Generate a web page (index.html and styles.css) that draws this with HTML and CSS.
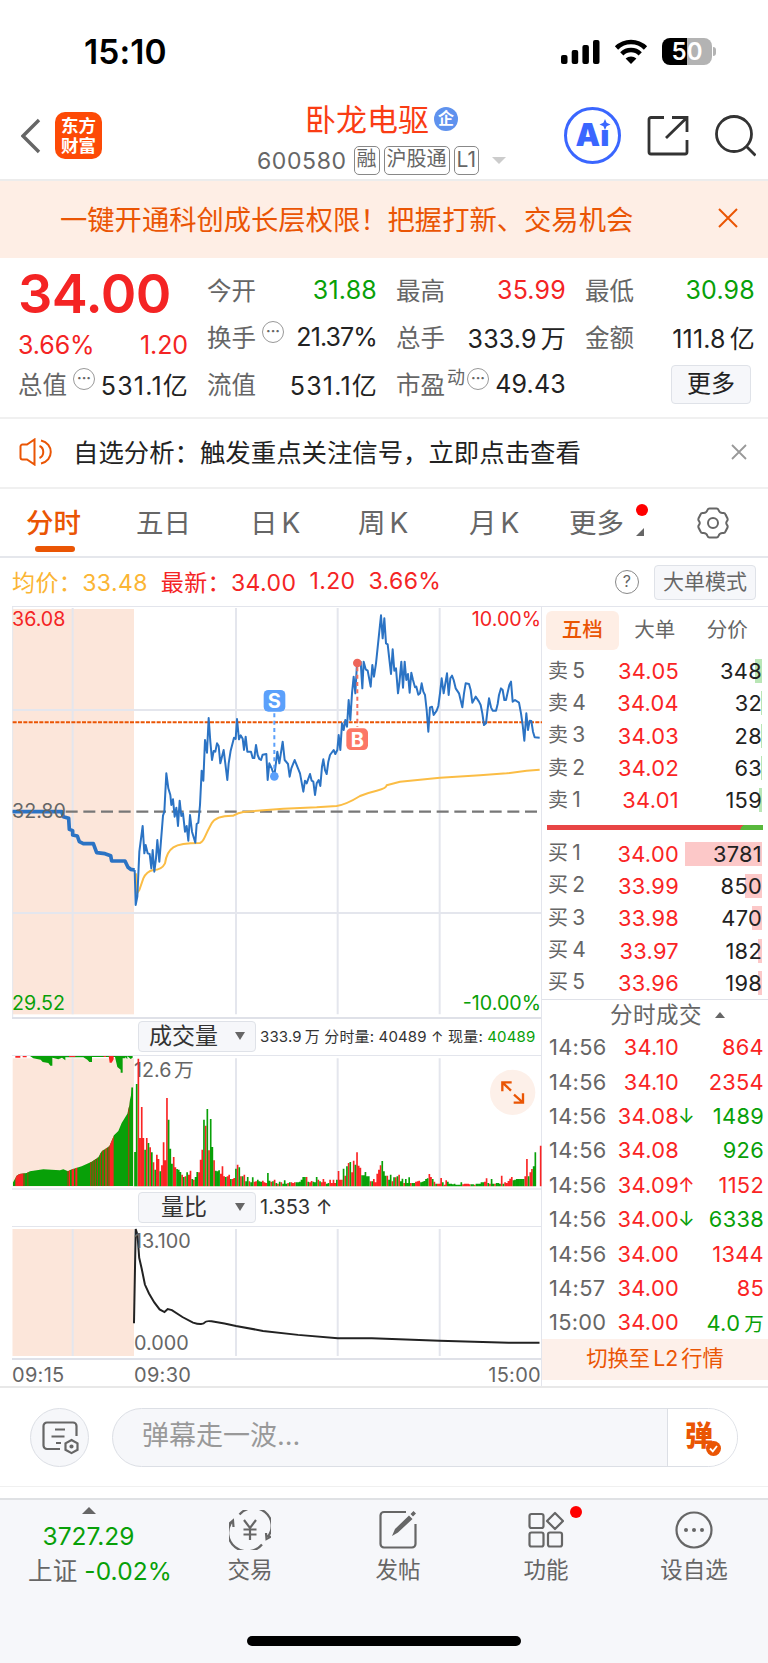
FILE: index.html
```html
<!DOCTYPE html>
<html lang="zh-CN">
<head>
  <meta charset="UTF-8" />
  <meta name="viewport" content="width=device-width, initial-scale=1" />
  <title>卧龙电驱 600580</title>
  <link rel="stylesheet" href="styles.css">
</head>
<body>

<div class="status-bar">
  <span class="time">15:10</span>
  <div class="status-icons">
    <svg width="39" height="26" viewBox="0 0 39 26">
      <rect x="0" y="16" width="6.500" height="9" rx="2"/>
      <rect x="10.700" y="11" width="6.500" height="14" rx="2"/>
      <rect x="21.400" y="6" width="6.500" height="19" rx="2"/>
      <rect x="32" y="1" width="6.500" height="24" rx="2"/>
    </svg>
    <svg width="34" height="26" viewBox="0 0 34 26">
      <path d="M2.500 9a20.500 20.500 0 0 1 29 0M7.800 14.800a13 13 0 0 1 18.400 0" fill="none" stroke="#000" stroke-width="4.600"/>
      <path d="M17 25l-5.400-5.500a8 8 0 0 1 10.800 0z"/>
    </svg>
    <div class="battery"><span>50</span><i></i></div>
  </div>
</div>

<header class="navbar">
  <svg class="back" width="20" height="36" viewBox="0 0 20 36"><path d="M18 2L2 18l16 16" fill="none" stroke="#666" stroke-width="3.400"/></svg>
  <div class="logo"><span>东方</span><span>财富</span></div>
  <div class="stock">
    <div class="stock-name">卧龙电驱<span class="badge">企</span></div>
    <div class="stock-code">600580<span class="tag first">融</span><span class="tag">沪股通</span><span class="tag">L1</span><i class="caret"></i></div>
  </div>
  <div class="nav-icons">
    <div class="ai">Ai<svg width="12" height="11" viewBox="0 0 12 11"><path d="M6 0l1.600 3.800L11.500 5.500 7.600 7.200 6 11 4.400 7.200.500 5.500l3.900-1.700z" fill="#3a66ff"/></svg></div>
    <svg width="42" height="42" viewBox="0 0 42 42" fill="none" stroke="#333" stroke-width="2.800">
      <path d="M17 2.500H4a2 2 0 0 0-2 2V37a2 2 0 0 0 2 2h34a2 2 0 0 0 2-2V25M25 2.500h15V17M40 2.500L19 23"/>
    </svg>
    <svg width="42" height="42" viewBox="0 0 42 42" fill="none" stroke="#333" stroke-width="2.800">
      <circle cx="20" cy="19" r="17.500"/><path d="M32.500 31.500l9 9"/>
    </svg>
  </div>
</header>

<div class="banner">
  <span>一键开通科创成长层权限！把握打新、交易机会</span>
  <svg width="20" height="20" viewBox="0 0 20 20"><path d="M1 1l18 18M19 1L1 19" stroke="#ea5504" stroke-width="2"/></svg>
</div>

<section class="quote">
  <div class="col first">
    <div class="price">34.00</div>
    <div class="item change"><b>3.66%</b><b>1.20</b></div>
    <div class="item"><span>总值<em class="dots">···</em></span><b class="dark wide">531.1亿</b></div>
  </div>
  <div class="col">
    <div class="item"><span>今开</span><b class="green">31.88</b></div>
    <div class="item"><span>换手<em class="dots">···</em></span><b class="dark narrow">21.37%</b></div>
    <div class="item"><span>流值</span><b class="dark wide">531.1亿</b></div>
  </div>
  <div class="col">
    <div class="item"><span>最高</span><b>35.99</b></div>
    <div class="item"><span>总手</span><b class="dark">333.9<s>万</s></b></div>
    <div class="item"><span>市盈<sup>动</sup><em class="dots tight">···</em></span><b class="dark">49.43</b></div>
  </div>
  <div class="col">
    <div class="item"><span>最低</span><b class="green">30.98</b></div>
    <div class="item"><span>金额</span><b class="dark">111.8<s>亿</s></b></div>
    <div class="more-btn">更多</div>
  </div>
</section>

<div class="notice">
  <svg width="34" height="28" viewBox="0 0 34 28" fill="none" stroke="#ea5504" stroke-width="2">
    <path d="M15.500 1.500v25L8 21.500H3.500a2 2 0 0 1-2-2v-11a2 2 0 0 1 2-2H8zM20.500 8c5 2 5 10 0 12M22 2.500c13 3 13 20 0 23"/>
  </svg>
  <span>自选分析：触发重点关注信号，立即点击查看</span>
  <svg width="16" height="16" viewBox="0 0 16 16"><path d="M1 1l14 14M15 1L1 15" stroke="#999" stroke-width="1.800"/></svg>
</div>

<nav class="tabs">
  <span class="tab active">分时</span>
  <span class="tab">五日</span>
  <span class="tab">日<i>K</i></span>
  <span class="tab">周<i>K</i></span>
  <span class="tab">月<i>K</i></span>
  <span class="tab more">更多</span>
  <svg class="gear" width="32" height="32" viewBox="0 0 32 32" fill="none" stroke="#666" stroke-width="2">
    <path d="M12.500 1.500h7q1.500 0 2 1.500 1 3 4 3h1q1.500 0 2 1.500l2 4q.500 1.500-.500 2.500-1.500 2 0 4 1 1 .500 2.500l-2 4q-.500 1.500-2 1.500h-1q-3 0-4 3-.500 1.500-2 1.500h-7q-1.500 0-2-1.500-1-3-4-3h-1q-1.500 0-2-1.500l-2-4q-.500-1.500.500-2.500 1.500-2 0-4-1-1-.500-2.500l2-4q.500-1.500 2-1.500h1q3 0 4-3 .500-1.500 2-1.500z"/>
    <circle cx="16" cy="16" r="5"/>
  </svg>
</nav>

<div class="info-row">
  <span class="avg">均价：33.48</span>
  <span class="last">最新：34.00</span>
  <span class="last">1.20</span>
  <span class="last">3.66%</span>
  <span class="help">?</span>
  <span class="mode-btn">大单模式</span>
</div>

<main class="board">
  <div class="charts">
    <svg class="price-chart" viewBox="36 171 1590 1230" preserveAspectRatio="none">
      <rect x="38" y="177" width="364" height="1216" fill="#fce6da"/>
      <path class="grid" d="M38 480H1626M38 1089H1626M218 174V1393M708 174V1393M1013 174V1393M1319 174V1393"/>
      <path class="grid edge" d="M38 171V1401"/>
      <path d="M38 517H1626" stroke="#ea5504" stroke-width="6" stroke-dasharray="12 4"/>
      <path d="M38 785H1626" stroke="#777" stroke-width="7" stroke-dasharray="36 17"/>
      <path class="line avg-line" d="M408 970L411 1030 418 1020 430 985Q440 964 460 960Q485 960 495 940Q500 905 520 892T600 879Q608 876 615 860T635 820T700 797Q715 788 730 786L800 780 850 776 950 772 1010 768Q1040 763 1080 738Q1100 729 1130 722T1160 706L1200 695 1260 689 1320 683 1440 676 1520 670 1580 662 1619 659"/>
      <path class="line pre-line" d="M38 785H185L190 800 206 805 208 838 218 842V855L232 858 238 875 250 881H280L290 908 315 911 332 917 335 933H375L384 952 392 958 404 960"/>
      <path class="line" d="M404 960L407 1065 412 1040 418 905 428 828 433 910 437 885 443 910 449 912 454 955 458 900 463 965 468 925 472 870 478 935 489 797 493 785 499 670 505 715 511 735 514 765 519 748 524 800 529 773 534 828 539 752 544 798 549 790 555 845 560 828 565 872 570 795 576 845 586 878 590 822 595 818 600 765 605 662 610 692 615 570 621 608 626 504 631 575 636 630 641 603 646 605 651 580 656 588 661 640 671 600 682 690 686 640 692 602 702 563 707 567 711 507 717 568 722 556 728 566 732 600 737 560 742 605 753 605 758 624 763 624 768 585 773 615 778 627 783 630 788 614 799 612 803 690 808 640 815 655 823 678 832 605 838 640 848 575 854 630 864 642 869 680 874 655 884 630 894 655 900 670 910 725 915 692 920 700 930 672 935 692 940 695 945 735 950 700 956 690 961 708 966 650 970 628 975 660 980 672 985 635 990 615 1001 600 1006 612 1012 600 1016 555 1021 600 1026 520 1031 540 1036 510 1041 530 1046 450 1051 510 1056 430 1061 380 1066 430 1071 340 1082 335 1087 415 1091 335 1097 358 1103 362 1112 410 1117 345 1122 380 1128 340 1143 196 1148 265 1153 205 1158 280 1163 283 1173 372 1178 298 1183 362 1188 355 1194 430 1198 400 1204 335 1209 413 1214 335 1219 390 1224 372 1229 428 1234 368 1239 390 1245 412 1249 410 1255 434 1260 430 1265 400 1270 425 1275 435 1280 480 1285 545 1290 472 1296 470 1301 495 1310 482 1315 468 1320 430 1325 385 1331 430 1341 370 1346 435 1351 385 1356 377 1361 390 1367 415 1377 430 1387 472 1392 430 1397 400 1407 402 1412 420 1417 458 1427 440 1437 455 1442 465 1447 490 1452 525 1458 520 1462 485 1467 445 1473 472 1478 482 1488 482 1493 462 1497 435 1503 415 1508 420 1513 450 1518 450 1528 405 1533 395 1538 455 1545 450 1557 458 1563 490 1568 525 1573 572 1579 490 1584 540 1589 512 1594 513 1599 545 1604 562 1619 563"/>
      <path d="M823 490V668" stroke="#5ba0fb" stroke-width="6" stroke-dasharray="12 10"/>
      <circle cx="823" cy="679" r="13" fill="#5ba0fb"/>
      <rect x="791" y="420" width="65" height="65" rx="14" fill="#5ba0fb"/>
      <text class="mark" x="823" y="475">S</text>
      <path d="M1072 352V530" stroke="#f4705f" stroke-width="6" stroke-dasharray="12 10"/>
      <circle cx="1072" cy="339" r="13" fill="#ee6559"/>
      <rect x="1039" y="535" width="65" height="65" rx="14" fill="#fc7766"/>
      <text class="mark" x="1072" y="591">B</text>
      <text class="label red" x="36" y="228">36.08</text>
      <text class="label" x="36" y="804">32.80</text>
      <text class="label green" x="36" y="1380">29.52</text>
      <text class="label red" x="1623" y="228" text-anchor="end">10.00%</text>
      <text class="label green" x="1623" y="1380" text-anchor="end">-10.00%</text>
    </svg>

    <div class="chart-head">
      <span class="select">成交量<i></i></span>
      <span class="small">333.9<s>万</s> 分时量: 40489 ↑ 现量: <span class="green">40489</span></span>
    </div>
    <svg class="volume-chart" id="volumeChart" viewBox="36 467 1590 396" preserveAspectRatio="none">
      <rect x="38" y="474" width="364" height="384" fill="#fce6da"/>
      <path class="grid" d="M218 474V858M708 474V858M1013 474V858M1319 474V858"/>
      <clipPath id="preArea"><path d="M38 858V848L50 826 58 821 80 818 90 813 130 807 180 810 190 807 204 813 212 808 245 798 275 784 295 771 305 753 328 738 342 705 355 692 365 668 382 640 388 615 390 598 393 585 394 561H400V858z"/></clipPath>
      <g clip-path="url(#preArea)">
        <rect x="38" y="474" width="362" height="384" fill="#08a008"/>
        <path d="M46 474h24v384H46zM206 474h4v384h-4zM215 474h7v384h-7zM226 474h6v384h-6zM316 474h4v384h-4zM328 474h13v384h-13z" fill="#fa2424"/>
        <path d="M70 474h4v384h-4zM82 474h3v384h-3zM202 474h4v384h-4zM270 474h4v384h-4zM277 474h4v384h-4zM284 474h4v384h-4zM291 474h3v384h-3zM299 474h4v384h-4zM306 474h6v384h-6zM323 474h5v384h-5zM384 474h4v384h-4z" fill="#944a10"/>
      </g>
      <path d="M38 467H90L100 474 122 478 128 485 145 488 151 496H157V472L175 477 186 472 196 480V471H250L262 478 268 485H276V470H345L352 500 362 508V517H368V474H376V470L382 477V468L392 476 398 472V467z" fill="#08a008"/>
      <path d="M46 467h15v5H46zM68 467h12v4H68zM207 467h19v3h-19zM311 467h7v3h-7zM326 467h15v10l-6 10h-6z" fill="#fa2424"/>
      <text class="label" x="402" y="531">12.6<tspan dx="8">万</tspan></text>
      <circle cx="1538" cy="576" r="68" fill="#fdf0e9"/>
      <path d="M1533 571L1507 546M1507 573V546H1535M1542 583L1569 607M1569 579V607H1541" fill="none" stroke="#ea5504" stroke-width="7"/>
    </svg>

    <div class="chart-head second">
      <span class="select">量比<i></i></span>
      <span class="mid">1.353 ↑</span>
    </div>
    <svg class="ratio-chart" viewBox="12 1227 530 132" preserveAspectRatio="none">
      <rect x="12.500" y="1229" width="121.500" height="128" fill="#fce6da"/>
      <path class="grid thin" d="M72.700 1229V1357M236 1229V1357M337.700 1229V1357M439.700 1229V1357"/>
      <path d="M134 1324L135.700 1229 137.500 1235 139.200 1258 141.700 1269 144.900 1285 149 1294 154.300 1303 159.600 1310 164.500 1312.700 167.700 1309.700 171.900 1310.700 182.400 1317.700 193 1323.300Q198 1325 201 1324.800T205 1323 211.500 1322L224.500 1324.300 236 1326.700 263 1331.700 298 1335.700 337.800 1339 371.800 1339 439.500 1341.700 508.600 1343.700H539.500" fill="none" stroke="#222" stroke-width="2"/>
      <text class="label px" x="134" y="1248.500">13.100</text>
      <text class="label px" x="134" y="1351">0.000</text>
    </svg>
    <div class="time-axis"><span>09:15</span><span>09:30</span><span>15:00</span></div>
  </div>

  <aside class="side">
    <div class="side-tabs"><span class="on">五档</span><span>大单</span><span>分价</span></div>
    <ul class="orders">
      <li><span>卖<i>5</i></span><b>34.05</b><em class="sell" style="--w:7px">348</em></li>
      <li><span>卖<i>4</i></span><b>34.04</b><em class="sell" style="--w:1px">32</em></li>
      <li><span>卖<i>3</i></span><b>34.03</b><em class="sell" style="--w:1px">28</em></li>
      <li><span>卖<i>2</i></span><b>34.02</b><em class="sell" style="--w:1px">63</em></li>
      <li><span>卖<i>1</i></span><b>34.01</b><em class="sell" style="--w:3px">159</em></li>
    </ul>
    <div class="ratio-bar"></div>
    <ul class="orders">
      <li><span>买<i>1</i></span><b>34.00</b><em style="--w:77px">3781</em></li>
      <li><span>买<i>2</i></span><b>33.99</b><em style="--w:17px">850</em></li>
      <li><span>买<i>3</i></span><b>33.98</b><em style="--w:10px">470</em></li>
      <li><span>买<i>4</i></span><b>33.97</b><em style="--w:4px">182</em></li>
      <li><span>买<i>5</i></span><b>33.96</b><em style="--w:4px">198</em></li>
    </ul>
    <div class="deals-title">分时成交<i></i></div>
    <ul class="deals">
      <li><span>14:56</span><b>34.10</b><u></u><em>864</em></li>
      <li><span>14:56</span><b>34.10</b><u></u><em>2354</em></li>
      <li><span>14:56</span><b>34.08</b><u class="green">↓</u><em class="green">1489</em></li>
      <li><span>14:56</span><b>34.08</b><u></u><em class="green">926</em></li>
      <li><span>14:56</span><b>34.09</b><u>↑</u><em>1152</em></li>
      <li><span>14:56</span><b>34.00</b><u class="green">↓</u><em class="green">6338</em></li>
      <li><span>14:56</span><b>34.00</b><u></u><em>1344</em></li>
      <li><span>14:57</span><b>34.00</b><u></u><em>85</em></li>
      <li><span>15:00</span><b>34.00</b><u></u><em class="green">4.0<s>万</s></em></li>
    </ul>
    <div class="l2-btn">切换至<i>L2</i>行情</div>
  </aside>
</main>

<div class="comment">
  <div class="round-btn">
    <svg width="38" height="34" viewBox="0 0 38 34" fill="none" stroke="#666" stroke-width="2.200">
      <path d="M18 28H5a3.500 3.500 0 0 1-3.500-3.500V5A3.500 3.500 0 0 1 5 1.500h26A3.500 3.500 0 0 1 34.500 5v10M13 8.500h10M9.500 15.500h13M14 22h5"/>
      <path d="M29.500 19l6 3.300v6.500l-6 3.300-6-3.300v-6.500z"/><circle cx="29.500" cy="25.500" r="1" />
    </svg>
  </div>
  <div class="input">
    <span>弹幕走一波...</span>
    <div class="danmu">弹<svg width="15" height="15" viewBox="0 0 15 15"><circle cx="7.500" cy="7.500" r="7.500" fill="#ea5504"/><path d="M4 7.500l2.800 2.800L11 5" fill="none" stroke="#fff" stroke-width="1.800"/></svg></div>
  </div>
</div>

<footer class="bottom-nav">
  <div class="index">
    <i></i>
    <b>3727.29</b>
    <span>上证 <b>-0.02%</b></span>
  </div>
  <div class="nav-item">
    <svg width="42" height="40" viewBox="0 0 42 40" fill="none" stroke="#666" stroke-width="2.200">
      <path d="M10.500 4.500A18 17.500 0 0 1 38.500 27M3.500 11A18 17.500 0 0 0 33 34.500M0 14l4-3.500.500 6.500M42 26.500l-4.500 2.500-.500-6M15 10l6 8 6-8M21 18v12M14.500 19.500h13M14.500 24.500h13"/>
    </svg>
    <span>交易</span>
  </div>
  <div class="nav-item">
    <svg width="40" height="40" viewBox="0 0 40 40" fill="none" stroke="#666" stroke-width="2.200">
      <path d="M28 2H6a3.500 3.500 0 0 0-3.500 3.500V34A3.500 3.500 0 0 0 6 37.500h28a3.500 3.500 0 0 0 3.500-3.500V14"/>
      <path d="M14 26l3-7L31 5.500l3.500 3.500L20 22.500zM32.500 4l3-3 2.500 2.500-3 3z" fill="#666" stroke="none"/>
    </svg>
    <span>发帖</span>
  </div>
  <div class="nav-item dot">
    <svg width="36" height="38" viewBox="0 0 36 38" fill="none" stroke="#666" stroke-width="2.200">
      <rect x="1.500" y="3" width="14" height="14" rx="2"/><rect x="1.500" y="21.500" width="14" height="14" rx="2"/><rect x="20" y="21.500" width="14" height="14" rx="2"/>
      <path d="M27 2l8 8-8 8-8-8z" stroke-linejoin="round"/>
    </svg>
    <span>功能</span>
  </div>
  <div class="nav-item">
    <svg width="38" height="38" viewBox="0 0 38 38">
      <circle cx="19" cy="19" r="17.500" fill="none" stroke="#666" stroke-width="2.200"/>
      <g fill="#666"><circle cx="11" cy="19" r="2"/><circle cx="19" cy="19" r="2"/><circle cx="27" cy="19" r="2"/></g>
    </svg>
    <span>设自选</span>
  </div>
  <div class="home-bar"></div>
</footer>

<script src="script.js"></script>
</body>
</html>
```
FILE: styles.css
```css
* {
  box-sizing: border-box;
}

body {
  font-family: Inter, "Noto Sans CJK SC", sans-serif;
  background: #fff;
  color: #666;
  margin: 0;
  width: 768px;
  height: 1663px;
  overflow: hidden;
}

ul {
  list-style: none;
  margin: 0;
  padding: 0;
}

b, i, em, s, u {
  font-style: normal;
  font-weight: 400;
  text-decoration: none;
}

svg {
  display: block;
  flex: none;
}

.green {
  color: #08a008 !important;
}

/* status bar */
.status-bar {
  height: 90px;
  padding: 13px 53px 0 84px;
  display: flex;
  justify-content: space-between;
  align-items: center;
  color: #000;
}

.time {
  font-size: 33.5px;
  font-weight: 600;
  letter-spacing: 0.1px;
}

.status-icons {
  display: flex;
  align-items: center;
  gap: 14px;
}

.battery {
  position: relative;
  width: 50px;
  height: 27px;
  border-radius: 8px;
  background: linear-gradient(90deg, #000 50%, #b3b3b3 50%);
  color: #fff;
  font-size: 24px;
  font-weight: 600;
  line-height: 27px;
  text-align: center;
  margin-right: 3px;
}

.battery i {
  position: absolute;
  right: -4px;
  top: 9px;
  width: 3px;
  height: 9px;
  border-radius: 0 3px 3px 0;
  background: #b3b3b3;
}

/* navbar */
.navbar {
  height: 91px;
  border-bottom: 2px solid #ececec;
  padding-left: 21px;
  display: flex;
  align-items: center;
}

.back {
  margin-top: 3px;
}

.logo {
  width: 47px;
  height: 47px;
  margin-left: 14px;
  margin-top: 2px;
  border-radius: 10px;
  background: #fd4a06;
  color: #fff;
  font-family: "Noto Sans CJK SC", sans-serif;
  font-size: 17.5px;
  font-weight: 700;
  display: flex;
  flex-direction: column;
  align-items: center;
  padding-top: 3px;
}

.logo span {
  height: 20px;
  line-height: 20px;
}

.stock {
  width: 260px;
  margin-left: 152px;
  margin-top: 9px;
}

.stock-name {
  display: flex;
  align-items: center;
  height: 40px;
  padding-left: 51px;
  font-size: 31px;
  color: #fa3c14;
}

.badge {
  width: 24px;
  height: 24px;
  margin: 2px 0 0 5px;
  border-radius: 50%;
  background: #5f92ee;
  color: #fff;
  font-size: 16px;
  font-weight: 700;
  line-height: 23px;
  text-align: center;
}

.stock-code {
  display: flex;
  align-items: center;
  height: 43px;
  padding: 3px 0 0 3px;
  font-size: 23px;
  letter-spacing: 0.6px;
}

.tag {
  height: 29px;
  margin-left: 4px;
  padding: 0 2px;
  border: 1.5px solid #888;
  border-radius: 5px;
  font-size: 20px;
  line-height: 25px;
  letter-spacing: 0;
}

.tag:nth-of-type(3) {
  font-size: 21px;
}

.tag.first {
  margin-left: 7px;
}

.caret {
  margin-left: 13px;
  border: 7px solid transparent;
  border-top-color: #ccc;
  border-bottom: 0;
}

.nav-icons {
  display: flex;
  align-items: center;
  gap: 25.5px;
  margin-left: 50px;
  margin-top: 2px;
}

.ai {
  position: relative;
  width: 57px;
  height: 57px;
  border: 3px solid #3a66ff;
  border-radius: 50%;
  color: #3a66ff;
  font-size: 31px;
  font-weight: 900;
  line-height: 50px;
  text-align: center;
}

.ai svg {
  position: absolute;
  right: 7px;
  top: 9px;
  background: #fff;
}

/* orange banner */
.banner {
  height: 77px;
  padding: 0 30px 3px 60px;
  display: flex;
  justify-content: space-between;
  align-items: center;
  background: #feeee5;
  color: #ea5504;
  font-size: 27.3px;
}

/* quote */
.quote {
  height: 161px;
  padding: 8px 13px 0 18px;
  display: grid;
  grid-template-columns: 170px 170px 170px 170px;
  column-gap: 19px;
  border-bottom: 2px solid #f0f0f0;
}

.col {
  display: flex;
  flex-direction: column;
}

.item {
  height: 47px;
  display: flex;
  justify-content: space-between;
  align-items: center;
  white-space: nowrap;
  font-size: 24.5px;
}

.item span {
  display: flex;
  align-items: center;
}

.item b {
  color: #f42424;
  font-size: 25px;
  letter-spacing: 0.2px;
}

.item b.dark {
  color: #222;
}

.item b.narrow {
  letter-spacing: -0.9px;
}

.item b.wide {
  letter-spacing: 1.2px;
  margin-right: -1px;
}

.item s {
  margin-left: 4px;
}

.price {
  height: 57px;
  line-height: 56px;
  font-size: 54px;
  font-weight: 600;
  letter-spacing: -0.5px;
  color: #f42424;
}

.change {
  height: 37px;
  padding-top: 6px;
}

.change b {
  letter-spacing: -0.1px;
}

.dots {
  width: 22px;
  height: 22px;
  margin: -9px 0 0 6px;
  border: 1.6px solid #999;
  border-radius: 50%;
  font-size: 14px;
  font-weight: 700;
  line-height: 18px;
  text-align: center;
}

.dots.tight {
  margin-left: 2px;
}

.item sup {
  font-size: 18px;
  line-height: 18px;
  margin-top: -12px;
  margin-left: 2px;
}

.more-btn {
  width: 80px;
  height: 39px;
  margin: 5px 4px 0 auto;
  border: 1.5px solid #dfe2e8;
  border-radius: 4px;
  background: #f6f7fa;
  color: #222;
  font-size: 24px;
  line-height: 35px;
  text-align: center;
}

/* notice */
.notice {
  height: 70px;
  padding: 0 21px 2px 19px;
  display: flex;
  align-items: center;
  border-bottom: 2px solid #f0f0f0;
  color: #222;
  font-size: 25.4px;
}

.notice span {
  margin-left: 20px;
  margin-top: -2px;
  flex: 1;
}

/* tabs */
.tabs {
  position: relative;
  height: 69px;
  display: flex;
  align-items: center;
  border-bottom: 2px solid #e5e7ec;
  font-size: 27.5px;
  padding-left: 26px;
}

.tab {
  position: relative;
  width: 110px;
  margin-top: -4px;
  white-space: nowrap;
}

.tab:nth-child(3) { margin-left: 4px; width: 108px; }
.tab:nth-child(4) { width: 111px; }
.tab:nth-child(5) { width: 100px; }

.tab i {
  margin-left: 4px;
  font-size: 28px;
}

.tab.active {
  color: #ea5504;
  font-weight: 500;
}

.tab.active::after {
  content: "";
  position: absolute;
  left: 9px;
  bottom: -11px;
  width: 40px;
  height: 6px;
  border-radius: 3px;
  background: #ea5504;
}

.tab.more::before {
  content: "";
  position: absolute;
  left: 67px;
  top: 3px;
  width: 12px;
  height: 12px;
  border-radius: 50%;
  background: #f00;
}

.tab.more::after {
  content: "";
  position: absolute;
  left: 67px;
  top: 27px;
  border-left: 8px solid transparent;
  border-bottom: 8px solid #666;
}

.gear {
  margin-left: 18px;
}

/* info row */
.info-row {
  height: 48px;
  padding: 0 12px;
  display: flex;
  align-items: center;
  gap: 13px;
  font-size: 23px;
  letter-spacing: 0.4px;
  white-space: nowrap;
}

.avg,
.last {
  margin-top: -3px;
}

.avg {
  color: #fbb534;
}

.last {
  color: #f42424;
}

.help {
  width: 24px;
  height: 24px;
  margin-left: auto;
  margin-right: 2px;
  border: 1.6px solid #888;
  border-radius: 50%;
  font-size: 16px;
  line-height: 21px;
  text-align: center;
}

.mode-btn {
  width: 102px;
  height: 35px;
  border: 1.5px solid #dfe2e8;
  border-radius: 4px;
  background: #f6f7fa;
  font-size: 21px;
  letter-spacing: 0;
  line-height: 31px;
  text-align: center;
}

/* charts */
.board {
  display: flex;
  height: 782px;
  border-bottom: 2px solid #e8e8e8;
}

.charts {
  width: 542px;
  padding-left: 12px;
  border-right: 1.5px solid #e3e5ec;
}

.price-chart,
.volume-chart,
.ratio-chart {
  width: 530px;
  border-top: 1px solid #e3e5ec;
}

.price-chart { height: 411px; }
.volume-chart { height: 133px; }
.ratio-chart { height: 132px; }

.grid {
  stroke: #e4e6ed;
  stroke-width: 6;
  fill: none;
}

.grid.edge {
  stroke-width: 3;
}

.grid.thin {
  stroke-width: 2;
}

.line {
  fill: none;
  stroke: #2b73c4;
  stroke-width: 6;
  stroke-linejoin: round;
}

.avg-line {
  stroke: #fbbd45;
}

.pre-line {
  stroke-width: 11;
}

.mark {
  fill: #fff;
  font-size: 60px;
  font-weight: 700;
  text-anchor: middle;
}

.label {
  fill: #666;
  font-size: 59px;
}

.label.px {
  font-size: 19.8px;
}

.label.red {
  fill: #f42424;
}

.label.green {
  fill: #08a008;
}

.chart-head {
  height: 38px;
  padding: 0 0 2px 126px;
  display: flex;
  align-items: center;
  gap: 4px;
  border-top: 2px solid #dfe1e8;
  white-space: nowrap;
  color: #333;
}

.chart-head.second {
  border-top-color: #eceef2;
}

.select {
  flex: none;
  width: 118px;
  height: 31px;
  padding: 0 10px;
  display: flex;
  justify-content: space-between;
  align-items: center;
  border: 1.5px solid #dfe2e8;
  border-radius: 4px;
  background: #f6f7fa;
  font-size: 23px;
  line-height: 26px;
}

.second .select {
  padding-left: 22px;
}

.select i {
  border: 5px solid transparent;
  border-top: 8px solid #666;
  border-bottom: 0;
}

.small {
  font-size: 15px;
  letter-spacing: 0.15px;
  margin-top: -2px;
}

.small s {
  margin-left: 3px;
}

.mid {
  font-size: 20px;
}

.time-axis {
  height: 29px;
  display: grid;
  grid-template-columns: 122px 1fr auto;
  align-items: center;
  border-top: 2px solid #dfe1e8;
  padding-top: 2px;
  font-size: 20px;
  letter-spacing: 0.3px;
}

/* right side */
.side {
  flex: 1;
  border-top: 1px solid #e3e5ec;
}

.side-tabs {
  height: 48px;
  padding: 4px 0 0 4px;
  display: flex;
  font-size: 20.5px;
}

.side-tabs span {
  width: 72.5px;
  height: 39px;
  border-radius: 6px;
  line-height: 37px;
  text-align: center;
}

.side-tabs .on {
  background: #feeee5;
  color: #ea5504;
  font-weight: 500;
}

.orders li,
.deals li {
  height: 32.3px;
  display: flex;
  align-items: center;
  font-size: 21.8px;
  letter-spacing: 0.3px;
}

.orders li {
  padding: 0 6px;
}

.orders span {
  width: 54px;
  font-size: 20px;
  line-height: 24px;
  margin-top: -1px;
}

.orders span i {
  font-size: 21px;
  margin-left: 4px;
}

.orders b,
.deals b {
  width: 77px;
  text-align: right;
  color: #fa2424;
}

.orders em {
  flex: 1;
  height: 24px;
  line-height: 25px;
  text-align: right;
  color: #222;
  background: linear-gradient(#fcc8c8, #fcc8c8) right / var(--w) 100% no-repeat;
}

.orders em.sell {
  background-image: linear-gradient(#b9e6b5, #b9e6b5);
}

.ratio-bar {
  height: 5px;
  margin: 9px 5px 7px 5px;
  background: linear-gradient(120deg, #e84545 89.5%, #58b83c 89.5%);
}

.deals-title {
  height: 31px;
  border-top: 1.5px solid #dfe1e8;
  display: flex;
  justify-content: center;
  align-items: center;
  gap: 13px;
  padding-left: 25px;
  font-size: 22.5px;
  line-height: 28px;
  letter-spacing: 0.5px;
}

.deals-title i {
  border: 5px solid transparent;
  border-bottom: 6px solid #666;
  border-top: 0;
}

.deals li {
  height: 34.4px;
  padding: 0 4px 0 7px;
}

.deals span {
  width: 60px;
}

.deals b {
  width: 70px;
}

.deals u {
  width: 15px;
  font-size: 20px;
  margin-left: -1px;
  color: #fa2424;
  white-space: nowrap;
}

.deals em {
  flex: 1;
  text-align: right;
  color: #fa2424;
}

.deals s {
  margin-left: 4px;
  font-size: 19.5px;
}

.l2-btn {
  height: 41px;
  background: #fdf0ea;
  color: #ea5504;
  font-size: 21.3px;
  line-height: 38px;
  text-align: center;
}

.l2-btn i {
  margin: 0 3px;
}

/* comment bar */
.comment {
  height: 99px;
  padding: 0 30px;
  display: flex;
  align-items: center;
  gap: 23px;
  border-bottom: 1px solid #f0f0f0;
}

.round-btn {
  width: 59px;
  height: 59px;
  padding: 1px 0 0 2px;
  display: flex;
  justify-content: center;
  align-items: center;
  border: 1.5px solid #dcdfe5;
  border-radius: 50%;
  background: #f6f7fa;
}

.input {
  flex: 1;
  height: 59px;
  padding-left: 29px;
  display: flex;
  justify-content: space-between;
  align-items: center;
  border: 1.5px solid #dcdfe5;
  border-radius: 30px;
  background: #f6f7fa;
  overflow: hidden;
  color: #999;
  font-size: 27px;
}

.input span {
  margin-top: -7px;
}

.danmu {
  position: relative;
  width: 70px;
  height: 57px;
  padding-left: 17px;
  border-left: 1.5px solid #dcdfe5;
  background: #fff;
  color: #ea5504;
  font-size: 28px;
  font-weight: 900;
  line-height: 54px;
}

.danmu svg {
  position: absolute;
  left: 38px;
  top: 32px;
}

/* bottom nav */
.bottom-nav {
  position: relative;
  height: 165px;
  margin-top: 11px;
  padding-left: 3px;
  display: grid;
  grid-template-columns: 173px 148px 148px 148px 148px;
  align-items: start;
  border-top: 2px solid #dfe1e4;
  background: #f6f7fa;
}

.index {
  display: flex;
  flex-direction: column;
  align-items: center;
  padding: 7px 0 0 21px;
  font-size: 24.5px;
  white-space: nowrap;
}

.index b {
  color: #08a008;
}

.index > i {
  border: 7px solid transparent;
  border-bottom: 7px solid #666;
  border-top: 0;
  margin-right: 22px;
}

.index > b {
  margin: 7px 23px 0 0;
  line-height: 31px;
}

.index > span {
  line-height: 39px;
  letter-spacing: 0.1px;
}

.nav-item {
  position: relative;
  display: flex;
  flex-direction: column;
  align-items: center;
  padding-top: 10px;
  font-size: 22.5px;
}

.nav-item svg {
  height: 40px;
}

.nav-item span {
  line-height: 40px;
}

.nav-item.dot::after {
  content: "";
  position: absolute;
  left: 98px;
  top: 6px;
  width: 12px;
  height: 12px;
  border-radius: 50%;
  background: #f00;
}

.home-bar {
  position: absolute;
  left: 247px;
  bottom: 17px;
  width: 274px;
  height: 10px;
  border-radius: 5px;
  background: #000;
}
```
FILE: script.js
```js
// volume per minute, r = up, g = down
const volumes = `103g 307g 383r 145r 238r 145r 110g 145r 130g 117r 102g 72r 50g 95r 82r 45g 63r 132r 78r 265r
200g 113g 68g 88r 57r 52g 50g 43g 35r 28g 30r 42g 35r 47r 22g 20r 28g 43g 42r 80r 110r 200g 182r 232g 108r 202g
118g 78r 47g 45g 48g 38r 60r 30r 28g 30r 35r 22g 22r 25r 53g 65r 57g 30r 30g 35r 15g 28g 15r 12g 27g 14r 15r 20g
15g 14g 17r 12r 10r 40g 17g 14r 15g 20r 10g 8r 14g 12r 8g 18g 8g 10r 12g 12r 10r 12r 12g 12g 14g 20g 28g 28g 28r
14g 12r 16r 14g 12g 28g 20r 15g 12r 22r 14r 8g 10g 20r 10r 20r 10r 20g 46r 20r 20r 53g 32r 60g 70r 73g 42r 77r
65g 102r 62r 56r 33g 33g 43g 30g 30g 15r 15g 22r 12r 38r 50r 63r 76g 45g 32g 32r 20g 35g 15r 27g 27r 30g 35r 15g
23g 10r 22g 10g 27g 10r 10g 10g 14r 15r 17r 12g 14g 16g 22g 24g 37r 28r 22g 14r 8g 8r 8r 25r 12g 5r 18r 14g 8g
8g 6g 8g 5g 5g 5g 12g 6r 8r 8r 8r 6r 6g 6g 5r 8g 8g 8g 12g 12g 14r 24r 10g 8r 22g 8g 8r 10g 10g 8g 32r 8g 12r
10r 16r 23r 28r 18g 20g 22g 22g 22g 22g 22g 30r 82r 30g 42r 52r 60g 102g`.split(/\s+/);

const chart = document.getElementById("volumeChart");
const step = (1606 - 405) / (volumes.length - 1);
const paths = { r: "", g: "" };

volumes.forEach((v, i) => {
  paths[v.slice(-1)] += `M${(405 + i * step).toFixed(1)} 858v-${parseInt(v)}`;
});
// closing auction
paths.r += "M1622 858v-122";

for (const key in paths) {
  const path = document.createElementNS("http://www.w3.org/2000/svg", "path");
  path.setAttribute("d", paths[key]);
  path.setAttribute("stroke", key === "r" ? "#fa2424" : "#08a008");
  path.setAttribute("stroke-width", 5);
  chart.appendChild(path);
}
```
